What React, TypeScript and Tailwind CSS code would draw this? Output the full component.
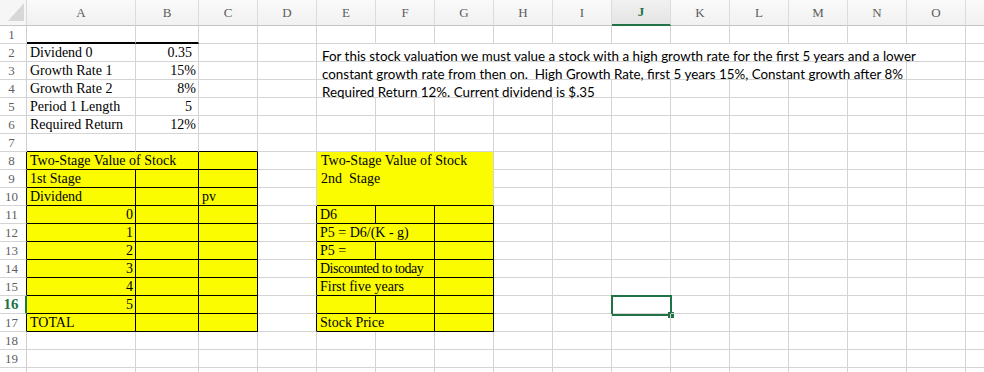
import clsx from 'clsx';

type Cell = {
  s?: number;
  t?: string;
  a?: 'r';
  pr?: string;
  k?: 'box' | 'yel' | 'yelEnd' | 'para' | 'sel';
  rb?: boolean;
  bb?: boolean;
  thick?: boolean;
  tight?: boolean;
};

const LETTERS = ['A', 'B', 'C', 'D', 'E', 'F', 'G', 'H', 'I', 'J', 'K', 'L', 'M', 'N', 'O', ''];

const SPAN: Record<number, string> = {
  1: 'col-span-1',
  2: 'col-span-2',
  3: 'col-span-3',
  5: 'col-span-5',
  10: 'col-span-10',
  11: 'col-span-11',
};

const g = (n = 1): Cell[] => Array.from({ length: n }, () => ({}));
const box = (t?: string, extra: Partial<Cell> = {}): Cell => ({ k: 'box', t, ...extra });

const rows: Cell[][] = [
  [{ thick: true }, { thick: true }, ...g(14)],
  [
    { t: 'Dividend 0' },
    { t: '0.35', a: 'r', pr: 'pr-[6px]' },
    ...g(2),
    { s: 11, k: 'para', t: 'For this stock valuation we must value a stock with a high growth rate for the first 5 years and a lower' },
    ...g(1),
  ],
  [
    { t: 'Growth Rate 1' },
    { t: '15%', a: 'r' },
    ...g(2),
    { s: 10, k: 'para', t: 'constant growth rate from then on.  High Growth Rate, first 5 years 15%, Constant growth after 8%' },
    ...g(2),
  ],
  [
    { t: 'Growth Rate 2' },
    { t: '8%', a: 'r' },
    ...g(2),
    { s: 5, k: 'para', t: 'Required Return 12%. Current dividend is $.35' },
    ...g(7),
  ],
  [{ t: 'Period 1 Length' }, { t: '5', a: 'r', pr: 'pr-[6px]' }, ...g(14)],
  [{ t: 'Required Return' }, { t: '12%', a: 'r' }, ...g(14)],
  [{ bb: true }, { bb: true }, { bb: true }, ...g(13)],
  [box('Two-Stage Value of Stock', { s: 2 }), box(), {}, { s: 3, k: 'yel', t: 'Two-Stage Value of Stock' }, ...g(9)],
  [box('1st Stage'), box(), box(), {}, { s: 3, k: 'yel', t: '2nd  Stage' }, ...g(9)],
  [box('Dividend'), box(), box('pv'), {}, { s: 3, k: 'yelEnd' }, ...g(9)],
  [box('0', { a: 'r' }), box(), box(), { rb: true }, box('D6'), box(), box(), ...g(9)],
  [box('1', { a: 'r' }), box(), box(), { rb: true }, box('P5 = D6/(K - g)', { s: 2 }), box(), ...g(9)],
  [box('2', { a: 'r' }), box(), box(), { rb: true }, box('P5 ='), box(), box(), ...g(9)],
  [box('3', { a: 'r' }), box(), box(), { rb: true }, box('Discounted to today', { s: 2, tight: true }), box(), ...g(9)],
  [box('4', { a: 'r' }), box(), box(), { rb: true }, box('First five years', { s: 2 }), box(), ...g(9)],
  [box('5', { a: 'r' }), box(), box(), { rb: true }, box(), box(), box(), ...g(2), { k: 'sel' }, ...g(6)],
  [box('TOTAL'), box(), box(), { rb: true }, box('Stock Price', { s: 2 }), box(), ...g(9)],
  g(16),
  g(16),
  g(16),
];

function SheetCell({ c }: { c: Cell }) {
  const isBox = c.k === 'box';
  const isYel = c.k === 'yel' || c.k === 'yelEnd';
  return (
    <div
      className={clsx(
        'relative flex h-[18px] items-end whitespace-nowrap border-r border-b',
        SPAN[c.s ?? 1],
        isBox || c.rb ? 'border-r-black' : 'border-r-[#d4d4d4]',
        c.thick
          ? 'border-b-2 border-b-black'
          : isBox || c.bb || c.k === 'yelEnd'
            ? 'border-b-black'
            : c.k === 'yel'
              ? 'border-b-[#fcfc00]'
              : 'border-b-[#d4d4d4]',
        (isBox || isYel) && 'bg-[#fcfc00]',
        c.a === 'r' ? 'justify-end' : 'justify-start',
      )}
    >
      {c.k === 'para' ? (
        <span className="whitespace-pre pl-[5px] font-['Lato',sans-serif] text-[13.4px] leading-[9px] text-black">
          {c.t}
        </span>
      ) : c.t ? (
        <span
          className={clsx(
            'whitespace-pre text-[14px] leading-[17px] text-black',
            c.tight && 'tracking-[-0.5px]',
            c.a === 'r' ? c.pr ?? 'pr-[2px]' : isYel ? 'pl-[4px]' : 'pl-[3px]',
          )}
        >
          {c.t}
        </span>
      ) : null}
      {c.k === 'sel' && (
        <div className="absolute -top-[1px] -left-[1px] h-[21px] w-[61px] border-2 border-[#217346]">
          <div className="absolute -right-[4px] -bottom-[4px] h-[6px] w-[6px] bg-[#217346]" />
        </div>
      )}
    </div>
  );
}

export default function App() {
  return (
    <div className="h-[372px] w-[984px] overflow-hidden bg-white font-['Liberation_Serif','Times_New_Roman',serif]">
      <div className="grid w-max grid-cols-[27px_109px_63px_repeat(14,59px)]">
        {/* column headers */}
        <div className="relative h-[26px] border-r border-b border-r-[#d9d9d9] border-b-[#c4c4c4] bg-[#f6f6f6]">
          <svg className="absolute top-[2px] left-[7px]" width="18" height="20" viewBox="0 0 18 20">
            <polygon points="1,19 17,19 17,1" fill="#d8d8d8" />
          </svg>
        </div>
        {LETTERS.map((l, i) => (
          <div
            key={i}
            className={clsx(
              'flex h-[26px] items-center justify-center border-r border-r-[#dcdcdc] text-[13px]',
              l === 'J'
                ? 'border-b-2 border-b-[#217346] bg-gradient-to-b from-[#f1f1f1] to-[#e4e4e4] font-bold text-[#217346]'
                : 'border-b border-b-[#c4c4c4] bg-gradient-to-b from-[#fafafa] to-[#f1f1f1] text-[#5c5c5c]',
            )}
          >
            {l}
          </div>
        ))}

        {rows.map((row, i) => {
          const n = i + 1;
          return [
            <div
              key={`h${n}`}
              className={clsx(
                'flex h-[18px] items-center justify-center border-b border-b-[#d4d4d4] pr-[3px]',
                n === 16
                  ? 'border-r-2 border-r-[#217346] text-[15px] font-bold text-[#217346]'
                  : 'border-r text-[13px] text-[#5f5f5f]',
                n >= 8 && n <= 17 && n !== 16 ? 'border-r-black' : n !== 16 && 'border-r-[#cfcfcf]',
              )}
            >
              {n < 20 ? n : ''}
            </div>,
            ...row.map((c, j) => <SheetCell key={`${n}-${j}`} c={c} />),
          ];
        })}
      </div>
    </div>
  );
}
